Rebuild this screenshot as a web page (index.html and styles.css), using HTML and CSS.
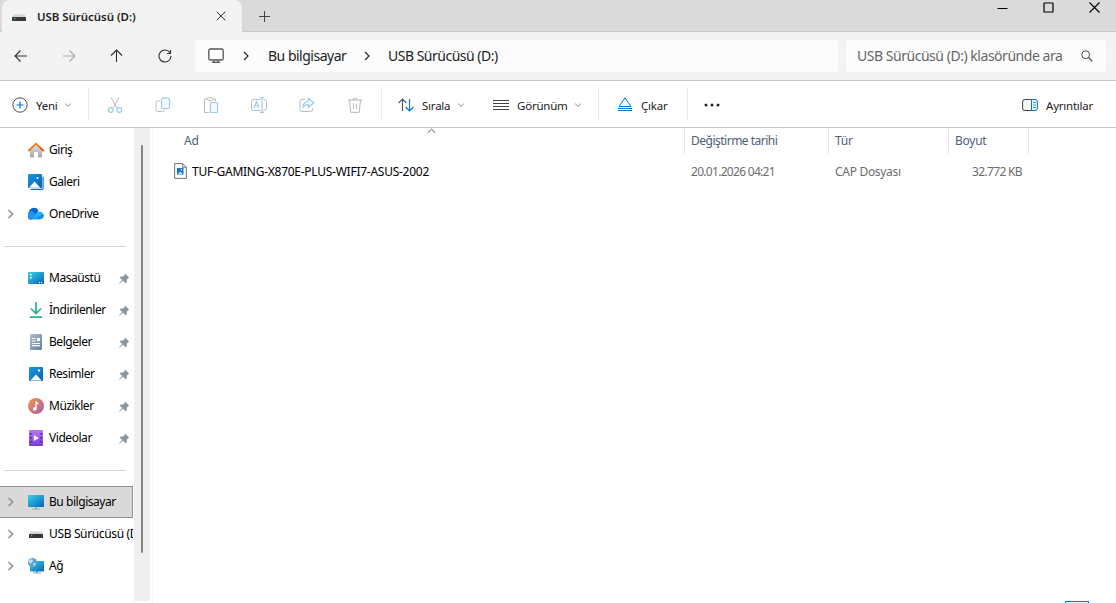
FILE: index.html
```html
<!DOCTYPE html>
<html lang="tr">
<head>
<meta charset="utf-8">
<title>USB Sürücüsü (D:)</title>
<link rel="stylesheet" href="styles.css">
</head>
<body>
<svg class="defs" width="0" height="0" aria-hidden="true">
  <defs>
    <linearGradient id="blue" x1="0" y1="0" x2="1" y2="1"><stop offset="0" stop-color="#199be2"/><stop offset="1" stop-color="#075fb4"/></linearGradient>
    <linearGradient id="teal" x1="0" y1="0" x2="1" y2="1"><stop offset="0" stop-color="#35d3e5"/><stop offset="1" stop-color="#0865b8"/></linearGradient>
    <linearGradient id="gray" x1="0" y1="0" x2="0" y2="1"><stop offset="0" stop-color="#e4e4e4"/><stop offset="1" stop-color="#a6a6a6"/></linearGradient>
    <linearGradient id="roof" x1="0" y1="0" x2="1" y2="1"><stop offset="0" stop-color="#f79b28"/><stop offset="1" stop-color="#d5500c"/></linearGradient>
    <linearGradient id="doc" x1="0" y1="0" x2="1" y2="1"><stop offset="0" stop-color="#b0c1d2"/><stop offset="1" stop-color="#647f9e"/></linearGradient>
    <linearGradient id="music" x1="0" y1="0" x2="1" y2="1"><stop offset="0" stop-color="#f39449"/><stop offset="1" stop-color="#a85cae"/></linearGradient>
    <linearGradient id="video" x1="0" y1="0" x2="0" y2="1"><stop offset="0" stop-color="#b877f4"/><stop offset="1" stop-color="#7a3bdb"/></linearGradient>
    <symbol id="drive" viewBox="0 0 16 16"><path d="M2.5 5.5h11L15 8H1z" fill="#d3d3d8"/><rect x="1" y="8" width="14" height="4" rx=".6" fill="#37373a"/><rect x="3" y="9" width="1.3" height="1.3" fill="#3ee04a"/></symbol>
    <symbol id="pin" viewBox="0 0 12 12"><path d="M7.2.8 11.2 4.8 9.9 5.6 8.7 7 8.9 9.2 7.6 10.2 5 7.7 1.2 11.1.8 10.8 4.2 7 1.6 4.5 2.8 3.4 5 3.4 6.4 2z" fill="#8b979f"/></symbol>
    <symbol id="chev-down" viewBox="0 0 8 8"><path d="M1.2 2.7 4 5.4 6.8 2.7" fill="none" stroke="#888"/></symbol>
    <symbol id="chev-side" viewBox="0 0 8 12"><path d="M1.5 2 5.7 6 1.5 10" fill="none" stroke="#929292" stroke-width="1.6"/></symbol>
    <symbol id="chev-path" viewBox="0 0 8 12"><path d="M2 2 6 6 2 10" fill="none" stroke="#2b2b2b" stroke-width="1.2"/></symbol>
  </defs>
</svg>

<div class="window">
  <header class="titlebar">
    <div class="tab">
      <svg class="i16"><use href="#drive"/></svg>
      <span class="tab-title">USB Sürücüsü (D:)</span>
      <svg class="tab-close" width="10" height="10" viewBox="0 0 10 10"><path d="M.7.7 9.3 9.3M9.3.7.7 9.3" stroke="#333" fill="none"/></svg>
    </div>
    <svg class="tab-new" width="11" height="11" viewBox="0 0 11 11"><path d="M5.5 0v11M0 5.5h11" stroke="#444" fill="none"/></svg>
    <div class="controls">
      <svg width="11" height="11" viewBox="0 0 11 11"><path d="M.5 6.5h10" stroke="#000"/></svg>
      <svg width="11" height="11" viewBox="0 0 11 11"><rect x="1" y="1" width="9" height="9" rx=".6" fill="none" stroke="#000" stroke-width="1.2"/></svg>
      <svg width="11" height="11" viewBox="0 0 11 11"><path d="M.5.5l10 10M10.500.5l-10 10" stroke="#000" stroke-width="1.1"/></svg>
    </div>
  </header>

  <nav class="navbar">
    <div class="nav-buttons">
      <svg viewBox="0 0 14 14"><path d="M13 7H1M6.500 1.500 1 7l5.500 5.500" fill="none" stroke="#303030" stroke-width="1.1"/></svg>
      <svg viewBox="0 0 14 14"><path d="M1 7h12M7.500 1.500 13 7l-5.500 5.500" fill="none" stroke="#ababab" stroke-width="1.1"/></svg>
      <svg viewBox="0 0 14 14"><path d="M6.500 13V1.200M1 6.500 6.500 1 12 6.500" fill="none" stroke="#303030" stroke-width="1.1"/></svg>
      <svg viewBox="0 0 14 14"><path d="M12.200 4A6 6 0 1 0 13 7M12.500 1v3.500H9" fill="none" stroke="#303030" stroke-width="1.1"/></svg>
    </div>
    <div class="address">
      <svg class="pc" width="16" height="16" viewBox="0 0 16 16"><rect x=".8" y="1" width="14.400" height="11" rx="1.600" fill="none" stroke="#555" stroke-width="1.3"/><path d="M6 12.500v1.500M10 12.500v1.500M3.800 14.400h8.400" stroke="#555" stroke-width="1.2"/></svg>
      <svg class="path-chev" width="8" height="12"><use href="#chev-path"/></svg>
      <span class="crumb">Bu bilgisayar</span>
      <svg class="path-chev second" width="8" height="12"><use href="#chev-path"/></svg>
      <span class="crumb last">USB Sürücüsü (D:)</span>
    </div>
    <div class="search">
      <span>USB Sürücüsü (D:) klasöründe ara</span>
      <svg width="12" height="12" viewBox="0 0 12 12"><circle cx="4.700" cy="4.700" r="3.900" fill="none" stroke="#444"/><path d="M7.500 7.500 11.300 11.300" stroke="#444" stroke-width="1.1"/></svg>
    </div>
  </nav>

  <div class="toolbar">
    <div class="group new">
      <svg width="16" height="16" viewBox="0 0 16 16"><circle cx="8" cy="8" r="7.200" fill="#fbfbfb" stroke="#555"/><path d="M8 4.500v7M4.500 8h7" stroke="#0078d4" stroke-width="1.200"/></svg>
      <span class="label yeni">Yeni</span>
      <svg class="i8"><use href="#chev-down"/></svg>
    </div>
    <div class="group edit">
      <svg viewBox="0 0 16 16"><path d="M4 .5l6 10.700M12 .5 6 11.200" stroke="#bbb" fill="none"/><g fill="none" stroke="#9bcbed" stroke-width="1.200"><circle cx="3.700" cy="13" r="2.300"/><circle cx="12.300" cy="13" r="2.300"/></g></svg>
      <svg viewBox="0 0 16 16"><path d="M5 4H3a2 2 0 0 0-2 2v6.500a2 2 0 0 0 2 2h4.500a2 2 0 0 0 2-2" fill="none" stroke="#c0c0c0"/><rect x="6.500" y="1.200" width="8" height="10.300" rx="1.800" fill="#f7fbfe" stroke="#9bcbed" stroke-width="1.200"/></svg>
      <svg viewBox="0 0 16 16"><path d="M4 2H1.500v13.500H6M10 2h2.500v2" fill="none" stroke="#bbb"/><rect x="4" y=".7" width="6" height="2.600" rx="1.200" fill="#fff" stroke="#bbb"/><rect x="7.500" y="5.500" width="7" height="10" rx=".8" fill="#f7fbfe" stroke="#9bcbed" stroke-width="1.200"/></svg>
      <svg viewBox="0 0 16 16"><path d="M9.500 2.500H3a2.500 2.500 0 0 0-2.500 2.500v6A2.500 2.500 0 0 0 3 13.500h6.500M12.500 2.500a2.800 2.800 0 0 1 3 2.500v6a2.800 2.800 0 0 1-3 2.500" fill="none" stroke="#bbb"/><path d="M3 11 5.500 4.500 8 11M3.800 9h3.400M9 .6h4M9 15.400h4M11 .6v14.800" fill="none" stroke="#9bcbed" stroke-width="1.100"/></svg>
      <svg viewBox="0 0 16 16"><path d="M6 2.500H3a2 2 0 0 0-2 2v8a2 2 0 0 0 2 2h8.500a2 2 0 0 0 2-2V11" fill="none" stroke="#bbb"/><path d="M9.500 4V1.200l5.500 4.600-5.500 4.500V7.500C7 7.300 5.200 8.500 4 10.700 4.200 6.500 6 4.300 9.500 4z" fill="#f4faff" stroke="#9bcbed" stroke-width="1.200"/></svg>
      <svg viewBox="0 0 16 16"><path d="M1 3h14M6 3a2 2 0 0 1 4 0M2.500 3l1.300 12.300h8.400L13.500 3M6.500 6.500v5.500M9.500 6.500v5.500" fill="none" stroke="#b5b5b5"/></svg>
    </div>
    <div class="group sort">
      <svg width="16" height="14" viewBox="0 0 16 14"><path d="M4.500 13V1M.6 5 4.500 1 8.400 5" stroke="#555" fill="none" stroke-width="1.100"/><path d="M11.500 1v12M7.600 9l3.900 4 3.900-4" stroke="#0078d4" fill="none" stroke-width="1.200"/></svg>
      <span class="label sirala">Sırala</span>
      <svg class="i8"><use href="#chev-down"/></svg>
    </div>
    <div class="group view">
      <svg width="16" height="12" viewBox="0 0 16 12"><path d="M0 1.500h16M0 4.500h16M0 7.500h16M0 10.500h16" stroke="#444"/></svg>
      <span class="label gorunum">Görünüm</span>
      <svg class="i8"><use href="#chev-down"/></svg>
    </div>
    <div class="group eject">
      <svg width="16" height="16" viewBox="0 0 16 16"><path d="M8 .8 14 9.500H2z" fill="#f8fbfe" stroke="#0078d4" stroke-linejoin="round"/><path d="M1 11.500h14M1 13.500h14" stroke="#0078d4"/></svg>
      <span class="label cikar">Çıkar</span>
    </div>
    <div class="group more">
      <svg width="16" height="4" viewBox="0 0 16 4"><g fill="#222"><circle cx="2" cy="2" r="1.500"/><circle cx="8" cy="2" r="1.500"/><circle cx="14" cy="2" r="1.500"/></g></svg>
    </div>
    <div class="details">
      <svg width="16" height="14" viewBox="0 0 16 14"><path d="M9.500 1.500H3A2.300 2.300 0 0 0 .6 4v6A2.300 2.300 0 0 0 3 12.500h6.500" fill="#f8f8f8" stroke="#444"/><path d="M9.500 1.500H13A2.300 2.300 0 0 1 15.400 4v6a2.300 2.300 0 0 1-2.400 2.500H9.500zM11.300 4.500h2.400M11.300 7h2.400M11.300 9.500h2.400" fill="#f3f9fe" stroke="#0078d4"/></svg>
      <span class="label ayrintilar">Ayrıntılar</span>
    </div>
  </div>

  <main class="body">
    <aside class="side">
      <div class="row"><i class="exp"></i><svg class="i16" viewBox="0 0 16 16"><path d="M2 7.500 8 2l6 5.500V14.500a1 1 0 0 1-1 1h-3V10H6v5.500H3a1 1 0 0 1-1-1z" fill="url(#gray)"/><path d="M.9 8.500 8 1.600l7.100 6.900" fill="none" stroke="url(#roof)" stroke-width="1.900" stroke-linecap="round" stroke-linejoin="round"/></svg><span class="name">Giriş</span></div>
      <div class="row"><i class="exp"></i><svg class="i16" viewBox="0 0 16 16"><path d="M14.500 2.500a1 1 0 0 1 1.200 1V14a2 2 0 0 1-2 2H3.500a1 1 0 0 1-1-1.200h11a1 1 0 0 0 1-1z" fill="#126dbd"/><rect y="0" width="14" height="14" rx="1" fill="url(#blue)"/><path d="M1 13.800 6.500 7.500l5.800 6.300z" fill="#fff"/><circle cx="9.500" cy="4" r="1.100" fill="#fff"/></svg><span class="name">Galeri</span></div>
      <div class="row"><svg class="exp"><use href="#chev-side"/></svg><svg class="i16" viewBox="0 0 16 16"><path d="M4 13.300A3.800 3.800 0 0 1 .8 6.500 5.300 5.300 0 0 1 10.500 4.300L5.500 13.300z" fill="#0a62da"/><path d="M2.500 5Q4.500 4.500 6 6.500L10 10 5 13.300H4A3.800 3.800 0 0 1 .8 6.500z" fill="#2492ea"/><path d="M4.800 13.300 7.500 8.300Q9.500 4.800 12.500 5.700A3.900 3.900 0 0 1 12 13.300z" fill="#22b2f5"/><path d="M4.800 13.300 15.500 8A3.800 3.800 0 0 1 12 13.300z" fill="#148ff0"/></svg><span class="name onedrive">OneDrive</span></div>
      <div class="row rule"></div>
      <div class="row"><i class="exp"></i><svg class="i16" viewBox="0 0 16 16"><rect y="2" width="16" height="12" rx="1" fill="url(#teal)"/><path d="M2 4h1.600v1.600H2zM2 7h1.600v1.600H2zM11 12h1v1h-1zM13 12h1v1h-1z" fill="#fff"/></svg><span class="name">Masaüstü</span><svg class="pin"><use href="#pin"/></svg></div>
      <div class="row"><i class="exp"></i><svg class="i16" viewBox="0 0 16 16"><path d="M8 .8v10.500M3.300 7 8 11.500 12.700 7M2.500 15.200h11" fill="none" stroke="#21b58e" stroke-width="1.700" stroke-linecap="round"/></svg><span class="name">İndirilenler</span><svg class="pin"><use href="#pin"/></svg></div>
      <div class="row"><i class="exp"></i><svg class="i16" viewBox="0 0 16 16"><rect x="2" width="12" height="16" rx="1" fill="url(#doc)"/><path d="M4 4.500h3.500M4 7h3.500M4 9.500h8M4 11.700h8" stroke="#fff" stroke-width="1.200"/><rect x="9" y="4" width="3" height="3.200" fill="#fff"/></svg><span class="name">Belgeler</span><svg class="pin"><use href="#pin"/></svg></div>
      <div class="row"><i class="exp"></i><svg class="i16" viewBox="0 0 16 16"><rect x="1" y="1" width="14" height="14" rx="1" fill="url(#blue)"/><path d="M2.300 14.500 8 8.500l5.700 6z" fill="#fff"/><circle cx="11" cy="4.500" r="1.200" fill="#fff"/></svg><span class="name">Resimler</span><svg class="pin"><use href="#pin"/></svg></div>
      <div class="row"><i class="exp"></i><svg class="i16" viewBox="0 0 16 16"><circle cx="8" cy="8" r="8" fill="url(#music)"/><circle cx="6.800" cy="10.800" r="1.900" fill="#fff"/><path d="M8 11V3.500q.5 1.700 2.500 2.200" fill="none" stroke="#fff" stroke-width="1.400"/></svg><span class="name">Müzikler</span><svg class="pin"><use href="#pin"/></svg></div>
      <div class="row"><i class="exp"></i><svg class="i16" viewBox="0 0 16 16"><rect x="1" width="14" height="16" rx="1" fill="url(#video)"/><path d="M2 3h1.500v1.500H2zM2 7h1.500v1.500H2zM2 11h1.500v1.500H2zM12.500 3H14v1.500h-1.500zM12.500 7H14v1.500h-1.500zM12.500 11H14v1.500h-1.500z" fill="#4e168f"/><path d="M5.800 5v6L11 8z" fill="#fff"/></svg><span class="name">Videolar</span><svg class="pin"><use href="#pin"/></svg></div>
      <div class="row rule"></div>
      <div class="row selected"><svg class="exp"><use href="#chev-side"/></svg><svg class="i16" viewBox="0 0 16 16"><path d="M7 13h2v2H7zM4 14.500h8v1H4z" fill="#9caab4"/><rect y="1" width="16" height="12" rx=".8" fill="url(#teal)"/></svg><span class="name">Bu bilgisayar</span></div>
      <div class="row"><svg class="exp"><use href="#chev-side"/></svg><svg class="i16"><use href="#drive"/></svg><span class="name usb">USB Sürücüsü (D:)</span></div>
      <div class="row"><svg class="exp"><use href="#chev-side"/></svg><svg class="i16" viewBox="0 0 16 16"><path d="M8 13h2v2H8zM5 14.600h8v1H5z" fill="#9caab4"/><rect x="2" y="3" width="14" height="10.500" rx=".8" fill="url(#teal)"/><circle cx="4.500" cy="4.500" r="4.500" fill="#5aa3cc"/><path d="M1 2.500 4 .7 5 3 3 5.500 1 4.500zM5 5l3 .5-2 3z" fill="#c5e2ef"/></svg><span class="name">Ağ</span></div>
    </aside>
    <div class="scroll"><div class="thumb"></div></div>
    <section class="files">
      <div class="grid head">
        <span class="c-name">Ad<svg class="sort-mark" width="9" height="6" viewBox="0 0 9 6"><path d="M.8 4.800 4.500 1.200 8.200 4.800" fill="none" stroke="#555"/></svg></span>
        <span class="date">Değiştirme tarihi</span><span>Tür</span><span>Boyut</span>
      </div>
      <div class="grid item">
        <span class="c-file"><svg width="13" height="16" viewBox="0 0 13 16"><path d="M.6.6h8.200l3.600 3.600v11.200H.6z" fill="#fafafa" stroke="#777"/><path d="M8.700.6v3.700h3.700" fill="none" stroke="#777"/><rect x="3" y="5" width="6.500" height="6.500" fill="#1674d1"/><path d="M4 11 6.300 8.500 8.500 11z" fill="#cfe6fb"/><circle cx="7.500" cy="6.800" r=".7" fill="#fff"/></svg><span class="filename">TUF-GAMING-X870E-PLUS-WIFI7-ASUS-2002</span></span>
        <span class="when">20.01.2026 04:21</span><span class="type">CAP Dosyası</span><span class="size">32.772 KB</span>
      </div>
      <div class="view-toggle"></div>
    </section>
  </main>
</div>
</body>
</html>
```

FILE: styles.css
```css
* { box-sizing: border-box; }
body { margin: 0; font-family: "Noto Sans", "Open Sans", sans-serif; font-size: 12px; color: #000; background: #fff; }
svg { display: block; flex: none; }
.defs { position: absolute; }
.window { width: 1116px; height: 603px; display: flex; flex-direction: column; overflow: hidden; }
.i16 { width: 16px; height: 16px; }
.i8 { width: 8px; height: 8px; }
span { white-space: nowrap; }

.titlebar { height: 32px; flex: none; display: flex; align-items: flex-start; background: #dadada; border-bottom: 1px solid #c9c9c9; padding-left: 2px; }
.tab { width: 240px; height: 32px; flex: none; display: flex; align-items: center; padding: 1px 16px 0 9px; background: #f3f3f3; border-radius: 8px 8px 0 0; }
.tab-title { margin-left: 10px; font-weight: 600; font-size: 11.5px; letter-spacing: -0.05px; color: #222; }
.tab-close { margin-left: auto; margin-top: -2px; }
.tab-new { margin: 11px 0 0 17px; }
.controls { display: flex; gap: 35px; margin: 2px 16px 0 auto; }

.navbar { height: 49px; flex: none; display: flex; align-items: center; background: #f3f3f3; border-bottom: 1px solid #c8c8c8; padding-right: 10px; }
.nav-buttons { width: 195px; display: flex; gap: 34px; padding-left: 14px; }
.nav-buttons svg { width: 14px; height: 14px; }
.address, .search { height: 32px; display: flex; align-items: center; background: #fcfcfc; border-radius: 4px; font-size: 14px; color: #222; }
.address { width: 643px; padding-left: 13px; }
.address span, .search span { margin-top: -1px; }
.path-chev { margin-left: 18px; }
.path-chev.second { margin-left: 0; }
.crumb { margin-left: 18px; width: 95px; letter-spacing: -0.5px; }
.crumb.last { width: auto; margin-left: 17px; }
.search { width: 260px; margin-left: 8px; padding: 0 13px 0 11px; justify-content: space-between; color: #666; letter-spacing: -0.47px; }

.toolbar { height: 47px; flex: none; display: flex; align-items: center; border-bottom: 1px solid #c8c8c8; padding-top: 1px; }
.group { height: 32px; display: flex; align-items: center; border-right: 1px solid #e9e9e9; }
.label { font-size: 11.5px; letter-spacing: -0.22px; color: #222; padding-top: 2px; }
.new { width: 89px; padding-left: 12px; }
.yeni { width: 29px; margin-left: 8px; }
.new .i8 { margin-left: -1px; }
.edit { width: 293px; padding-left: 18px; gap: 32px; }
.edit svg { width: 16px; height: 16px; }
.sort { width: 111px; padding-left: 16px; border: 0; }
.sirala { width: 35px; margin-left: 8px; }
.view { width: 106px; }
.gorunum { width: 57px; margin-left: 8px; }
.eject { width: 89px; padding-left: 18px; }
.cikar { margin-left: 8px; }
.more { padding-left: 16px; border: 0; }
.details { display: flex; align-items: center; margin-left: auto; padding-right: 21px; }
.ayrintilar { width: 49px; margin-left: 8px; }

.body { height: 475px; display: flex; }
.side { width: 134px; padding-top: 6px; overflow: hidden; }
.row { width: 133px; height: 32px; display: flex; align-items: center; padding-left: 7px; overflow: hidden; }
.exp { width: 8px; height: 12px; flex: none; margin-right: 13px; }
.name { margin: -2px 0 0 5px; letter-spacing: -0.45px; }
.usb { letter-spacing: -0.35px; }
.pin { width: 12px; height: 12px; margin: 1px 3px 0 auto; }
.rule::before { content: ""; width: 121px; height: 1px; margin-left: -3px; background: #d5d5d5; }
.selected { background: #d9d9d9; border: 1px solid #929292; border-left: 0; }
.scroll { width: 16px; height: 473px; padding: 17px 0 0 7px; background: #efefef; }
.thumb { width: 2px; height: 408px; background: #858585; border-radius: 1px; }
.files { flex: 1; margin-left: 2px; border-left: 1px solid #f5f5f5; display: flex; flex-direction: column; }
.grid { display: grid; grid-template-columns: 532px 144px 120px 80px; }
.head { height: 26px; line-height: 26px; color: #4c607a; letter-spacing: -0.25px; }
.head > span { border-right: 1px solid #e5e5e5; padding-left: 6px; }
.head .c-name { display: flex; padding-left: 31px; }
.head .date { letter-spacing: -0.5px; }
.sort-mark { margin-left: 228px; }
.item { height: 32px; margin-top: 1px; align-items: center; color: #6d6d6d; letter-spacing: -0.3px; }
.item > span { padding-left: 6px; }
.item .c-file { display: flex; align-items: center; padding-left: 21px; color: #000; }
.filename { margin-left: 5px; letter-spacing: -0.26px; }
.item .when { letter-spacing: -0.7px; }
.item .size { padding-right: 7px; text-align: right; letter-spacing: -0.65px; }
.view-toggle { width: 24px; height: 2px; margin: auto 27px 0 auto; border: 1px solid #0078d4; border-bottom: 0; background: #e5f3fb; }
```
